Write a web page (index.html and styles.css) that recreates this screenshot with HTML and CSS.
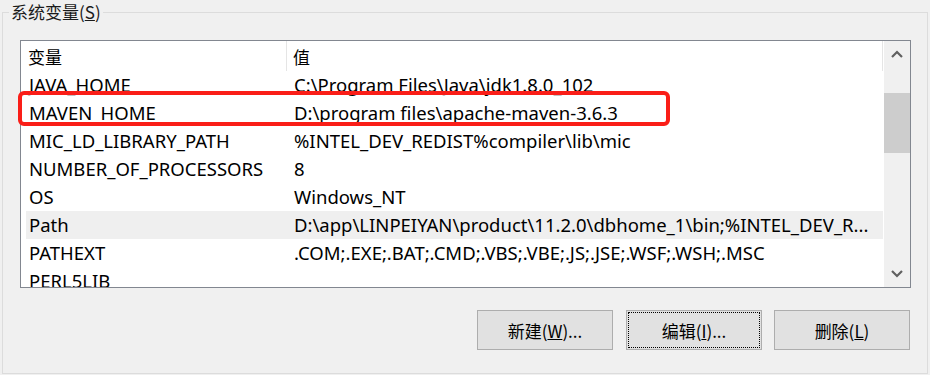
FILE: index.html
```html
<!DOCTYPE html>
<html lang="zh-CN">
<head>
  <meta charset="UTF-8">
  <title>系统变量</title>
  <link rel="stylesheet" href="styles.css">
</head>
<body>

  <div class="group">
    <span class="group-title">系统变量(<u>S</u>)</span>

    <div class="list">
      <div class="list-main">
        <div class="list-head">
          <div class="head-cell col-name">变量</div>
          <div class="head-cell col-value">值</div>
        </div>
        <div class="list-body">
          <div class="row"><span class="cell col-name">JAVA_HOME</span><span class="cell">C:\Program Files\Java\jdk1.8.0_102</span></div>
          <div class="row"><span class="cell col-name">MAVEN_HOME</span><span class="cell">D:\program files\apache-maven-3.6.3</span></div>
          <div class="row"><span class="cell col-name">MIC_LD_LIBRARY_PATH</span><span class="cell">%INTEL_DEV_REDIST%compiler\lib\mic</span></div>
          <div class="row"><span class="cell col-name">NUMBER_OF_PROCESSORS</span><span class="cell">8</span></div>
          <div class="row"><span class="cell col-name">OS</span><span class="cell">Windows_NT</span></div>
          <div class="row selected"><span class="cell col-name">Path</span><span class="cell">D:\app\LINPEIYAN\product\11.2.0\dbhome_1\bin;%INTEL_DEV_R...</span></div>
          <div class="row"><span class="cell col-name">PATHEXT</span><span class="cell">.COM;.EXE;.BAT;.CMD;.VBS;.VBE;.JS;.JSE;.WSF;.WSH;.MSC</span></div>
          <div class="row"><span class="cell col-name">PERL5LIB</span><span class="cell"></span></div>
        </div>
      </div>

      <!-- scrollbar -->
      <div class="scrollbar">
        <div class="sb-btn">
          <svg width="12" height="8" viewBox="0 0 12 8"><path d="M1 7 L6 2 L11 7" fill="none" stroke="#606060" stroke-width="2.2"/></svg>
        </div>
        <div class="sb-track"><div class="sb-thumb"></div></div>
        <div class="sb-btn">
          <svg width="12" height="8" viewBox="0 0 12 8"><path d="M1 1 L6 6 L11 1" fill="none" stroke="#606060" stroke-width="2.2"/></svg>
        </div>
      </div>
    </div>

    <div class="buttons">
      <button class="btn btn-new">新建(<u>W</u>)...</button>
      <button class="btn focus">编辑(<u>I</u>)...</button>
      <button class="btn">删除(<u>L</u>)</button>
    </div>
  </div>

  <!-- rote Markierung -->
  <div class="mark"></div>

</body>
</html>
```

FILE: styles.css
```css
:root {
  --bg: #f0f0f0;
  --line: #dcdcdc;
  --mark: #fa1e18;
}
*, *::before, *::after { box-sizing: border-box; margin: 0; padding: 0; }
body {
  width: 930px; height: 375px;
  background: var(--bg);
  font-family: "Noto Sans", "Noto Sans CJK SC", sans-serif;
  color: #000;
  overflow: hidden;
  position: relative;
}

.group {
  position: relative;
  margin: 12px 0 0 2px;
  width: 926px; height: 362px;
  border: 1px solid var(--line);
  padding: 27px 0 0 17px;
}
.group-title {
  position: absolute;
  top: -12px; left: 6px;
  padding: 0 2px;
  background: var(--bg);
  font-family: "Noto Sans CJK SC", sans-serif;
  font-size: 17px; line-height: 22px;
  color: #1a1a1a;
}

/* Listenansicht */
.list {
  display: flex;
  width: 891px; height: 248px;
  border: 1px solid #828790;
  background: #fff;
}
.list-main { flex: 1; display: flex; flex-direction: column; min-width: 0; }
.list-head {
  display: flex;
  height: 30px;
  border-right: 1px solid #e5e5e5;
  margin-right: 1px;
}
.head-cell {
  font-family: "Noto Sans CJK SC", sans-serif;
  font-size: 17px; line-height: 31px;
  padding-left: 7px;
}
.head-cell.col-name { width: 266px; border-right: 1px solid #e5e5e5; }
.head-cell.col-value { padding-left: 6px; }

.list-body { flex: 1; overflow: hidden; padding-left: 5px; }
.row {
  display: flex;
  height: 28px; line-height: 28px;
  font-size: 18.5px;
  white-space: nowrap;
  margin-right: 1px;
}
.row.selected { background: #efefef; }
.cell { padding-left: 3px; overflow: hidden; }
.cell.col-name { width: 265px; flex-shrink: 0; }

.scrollbar {
  width: 26px;
  display: flex; flex-direction: column;
  background: var(--bg);
}
.sb-btn { height: 26px; display: flex; align-items: center; justify-content: center; }
.sb-track { flex: 1; }
.sb-thumb { margin-top: 26px; height: 60px; background: #cdcdcd; }

/* Buttons */
.buttons {
  display: flex; justify-content: flex-end; gap: 12px;
  width: 891px;
  padding-right: 1px;
  margin-top: 22px;
}
.btn {
  width: 136px; height: 40px;
  background: #e1e1e1;
  border: 1px solid #adadad;
  font-family: "Noto Sans CJK SC", sans-serif;
  font-size: 17px; color: #000;
}
.btn-new { margin-right: 1px; }
.btn.focus { outline: 1px dotted #000; outline-offset: -3px; }

.mark {
  position: absolute;
  left: 18px; top: 91px;
  width: 652px; height: 35px;
  border: 4px solid var(--mark);
  border-radius: 6px;
}
```
